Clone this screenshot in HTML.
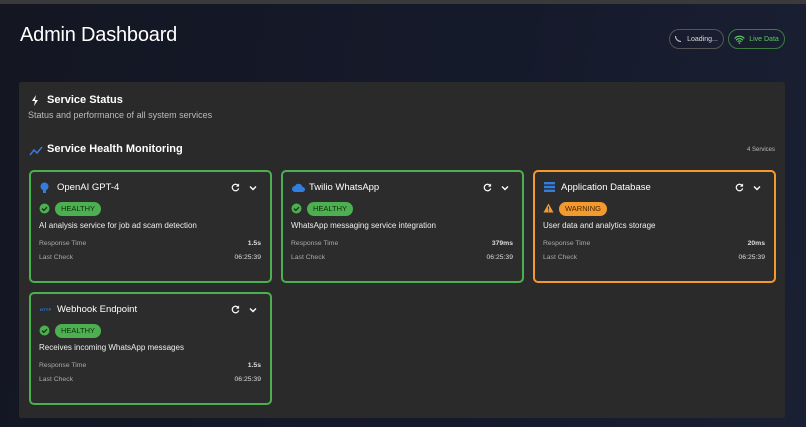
<!DOCTYPE html>
<html><head><style>
*{margin:0;padding:0;box-sizing:border-box}
body{width:806px;height:427px;overflow:hidden;background:linear-gradient(100deg,#141622 0%,#151a2b 60%,#1a2033 100%);font-family:"Liberation Sans",sans-serif;color:#fff;position:relative}
.top{position:absolute;left:0;top:0;width:806px;height:4px;background:#3a3a3a}
h1{position:absolute;left:20px;top:24px;font-size:20px;font-weight:400;letter-spacing:-0.2px}
.pill{position:absolute;top:29px;height:20px;border-radius:10px;font-size:7px;display:flex;align-items:center;justify-content:center}
.panel{position:absolute;left:19px;top:82px;width:766px;height:336px;background:#2a2a2a;border-radius:2px}
.abs{position:absolute}
.card{position:absolute;width:243px;height:113px;background:#2c2c2c;border:2px solid #4caf50;border-radius:5px}
.card.w{border-color:#f39a2e}
.t{position:absolute;left:26px;top:10px;font-size:9.5px}
.ic{position:absolute;left:9px;top:10px}
.rf{position:absolute;right:30px;top:11px}
.cv{position:absolute;right:13px;top:13px}
.st{position:absolute;left:8px;top:31px}
.bd{position:absolute;left:24px;top:30px;height:14px;border-radius:7px;font-size:7.5px;padding:0 6px;line-height:14px;color:#10300f;background:#4caf50}
.bd.w{background:#f39a2e;color:#4a2500}
.d{position:absolute;left:8px;top:49px;font-size:8px;color:#eee}
.l{position:absolute;left:8px;font-size:6.8px;color:#aaa}
.v{position:absolute;right:9px;font-size:6.8px;color:#ddd}
</style></head><body>
<div class="top"></div>
<h1>Admin Dashboard</h1>
<div class="pill" style="left:669px;width:55px;border:1px solid #555;color:#ddd"><span style="display:inline-block;width:6px;height:6px;border-left:1px solid #ccc;border-bottom:1px solid #ccc;border-radius:0 0 0 6px;margin-right:6px"></span>Loading...</div>
<div class="pill" style="left:728px;width:57px;border:1px solid #3d7a43;color:#5fc765"><svg width="11" height="9" viewBox="0 0 24 20" style="margin-right:4px"><path d="M2 7a14 14 0 0 1 20 0M5 11a9.5 9.5 0 0 1 14 0M8.5 14.5a5 5 0 0 1 7 0" fill="none" stroke="#5fc765" stroke-width="2.6" stroke-linecap="round"/><circle cx="12" cy="18" r="1.8" fill="#5fc765"/></svg>Live Data</div>
<div class="panel">
 <svg class="abs" style="left:12px;top:13px" width="8" height="11" viewBox="0 0 8 11"><path d="M5 0L1 6h3L3 11l4-6H4z" fill="#fff"/></svg>
 <div class="abs" style="left:28px;top:12px;font-size:11px;font-weight:700">Service Status</div>
 <div class="abs" style="left:9px;top:28px;font-size:9px;color:#bbb">Status and performance of all system services</div>
 <svg class="abs" style="left:10px;top:64px" width="14" height="10" viewBox="0 0 14 10"><path d="M1 9l4-5 3 3 5-6" fill="none" stroke="#3b7bd6" stroke-width="1.5"/></svg>
 <div class="abs" style="left:28px;top:61px;font-size:11px;font-weight:700">Service Health Monitoring</div>
 <div class="abs" style="right:10px;top:65px;font-size:6px;color:#bbb">4 Services</div>
</div>

<div class="card" style="left:29px;top:170px">
 <svg class="ic" width="9" height="12" viewBox="0 0 9 12"><circle cx="4.5" cy="4.5" r="4" fill="#2f7ee0"/><rect x="3" y="8" width="3" height="3" fill="#2f7ee0"/></svg>
 <div class="t">OpenAI GPT-4</div>
 <svg class="rf" width="9" height="9" viewBox="0 0 10 10"><path d="M8 3A3.6 3.6 0 1 0 8.5 6" fill="none" stroke="#fff" stroke-width="1.4"/><path d="M9 0.5V4H5.5z" fill="#fff"/></svg>
 <svg class="cv" width="8" height="6" viewBox="0 0 8 6"><path d="M1 1.5l3 3 3-3" fill="none" stroke="#fff" stroke-width="1.4"/></svg>
 <svg class="st" width="11" height="11" viewBox="0 0 11 11"><circle cx="5.5" cy="5.5" r="5" fill="#4caf50"/><path d="M3 5.6l1.8 1.8L8 4.2" fill="none" stroke="#1c2c1c" stroke-width="1.3"/></svg>
 <div class="bd">HEALTHY</div>
 <div class="d">AI analysis service for job ad scam detection</div>
 <div class="l" style="top:68px">Response Time</div><div class="v" style="top:68px;font-weight:700">1.5s</div>
 <div class="l" style="top:82px">Last Check</div><div class="v" style="top:82px">06:25:39</div>
</div>

<div class="card" style="left:281px;top:170px">
 <svg class="ic" style="top:11px" width="13" height="9" viewBox="0 0 13 9"><path d="M3 9a3 3 0 0 1 0-6 4 4 0 0 1 7.5 1A2.5 2.5 0 0 1 10.5 9z" fill="#2f7ee0"/></svg>
 <div class="t">Twilio WhatsApp</div>
 <svg class="rf" width="9" height="9" viewBox="0 0 10 10"><path d="M8 3A3.6 3.6 0 1 0 8.5 6" fill="none" stroke="#fff" stroke-width="1.4"/><path d="M9 0.5V4H5.5z" fill="#fff"/></svg>
 <svg class="cv" width="8" height="6" viewBox="0 0 8 6"><path d="M1 1.5l3 3 3-3" fill="none" stroke="#fff" stroke-width="1.4"/></svg>
 <svg class="st" width="11" height="11" viewBox="0 0 11 11"><circle cx="5.5" cy="5.5" r="5" fill="#4caf50"/><path d="M3 5.6l1.8 1.8L8 4.2" fill="none" stroke="#1c2c1c" stroke-width="1.3"/></svg>
 <div class="bd">HEALTHY</div>
 <div class="d">WhatsApp messaging service integration</div>
 <div class="l" style="top:68px">Response Time</div><div class="v" style="top:68px;font-weight:700">379ms</div>
 <div class="l" style="top:82px">Last Check</div><div class="v" style="top:82px">06:25:39</div>
</div>

<div class="card w" style="left:533px;top:170px">
 <svg class="ic" width="11" height="10" viewBox="0 0 11 10"><rect x="0" y="0" width="11" height="2.4" fill="#2f7ee0"/><rect x="0" y="3.8" width="11" height="2.4" fill="#2f7ee0"/><rect x="0" y="7.6" width="11" height="2.4" fill="#2f7ee0"/></svg>
 <div class="t">Application Database</div>
 <svg class="rf" width="9" height="9" viewBox="0 0 10 10"><path d="M8 3A3.6 3.6 0 1 0 8.5 6" fill="none" stroke="#fff" stroke-width="1.4"/><path d="M9 0.5V4H5.5z" fill="#fff"/></svg>
 <svg class="cv" width="8" height="6" viewBox="0 0 8 6"><path d="M1 1.5l3 3 3-3" fill="none" stroke="#fff" stroke-width="1.4"/></svg>
 <svg class="st" width="11" height="10" viewBox="0 0 11 10"><path d="M5.5 0.5L10.5 9.5H0.5z" fill="#f39a2e"/><rect x="5" y="3.5" width="1" height="3" fill="#2c2c2c"/><rect x="5" y="7.3" width="1" height="1" fill="#2c2c2c"/></svg>
 <div class="bd w">WARNING</div>
 <div class="d">User data and analytics storage</div>
 <div class="l" style="top:68px">Response Time</div><div class="v" style="top:68px;font-weight:700">20ms</div>
 <div class="l" style="top:82px">Last Check</div><div class="v" style="top:82px">06:25:39</div>
</div>

<div class="card" style="left:29px;top:292px">
 <div class="ic" style="top:13px;font-size:4px;font-weight:700;color:#2f7ee0;letter-spacing:0.3px">HTTP</div>
 <div class="t">Webhook Endpoint</div>
 <svg class="rf" width="9" height="9" viewBox="0 0 10 10"><path d="M8 3A3.6 3.6 0 1 0 8.5 6" fill="none" stroke="#fff" stroke-width="1.4"/><path d="M9 0.5V4H5.5z" fill="#fff"/></svg>
 <svg class="cv" width="8" height="6" viewBox="0 0 8 6"><path d="M1 1.5l3 3 3-3" fill="none" stroke="#fff" stroke-width="1.4"/></svg>
 <svg class="st" width="11" height="11" viewBox="0 0 11 11"><circle cx="5.5" cy="5.5" r="5" fill="#4caf50"/><path d="M3 5.6l1.8 1.8L8 4.2" fill="none" stroke="#1c2c1c" stroke-width="1.3"/></svg>
 <div class="bd">HEALTHY</div>
 <div class="d">Receives incoming WhatsApp messages</div>
 <div class="l" style="top:68px">Response Time</div><div class="v" style="top:68px;font-weight:700">1.5s</div>
 <div class="l" style="top:82px">Last Check</div><div class="v" style="top:82px">06:25:39</div>
</div>
</body></html>
